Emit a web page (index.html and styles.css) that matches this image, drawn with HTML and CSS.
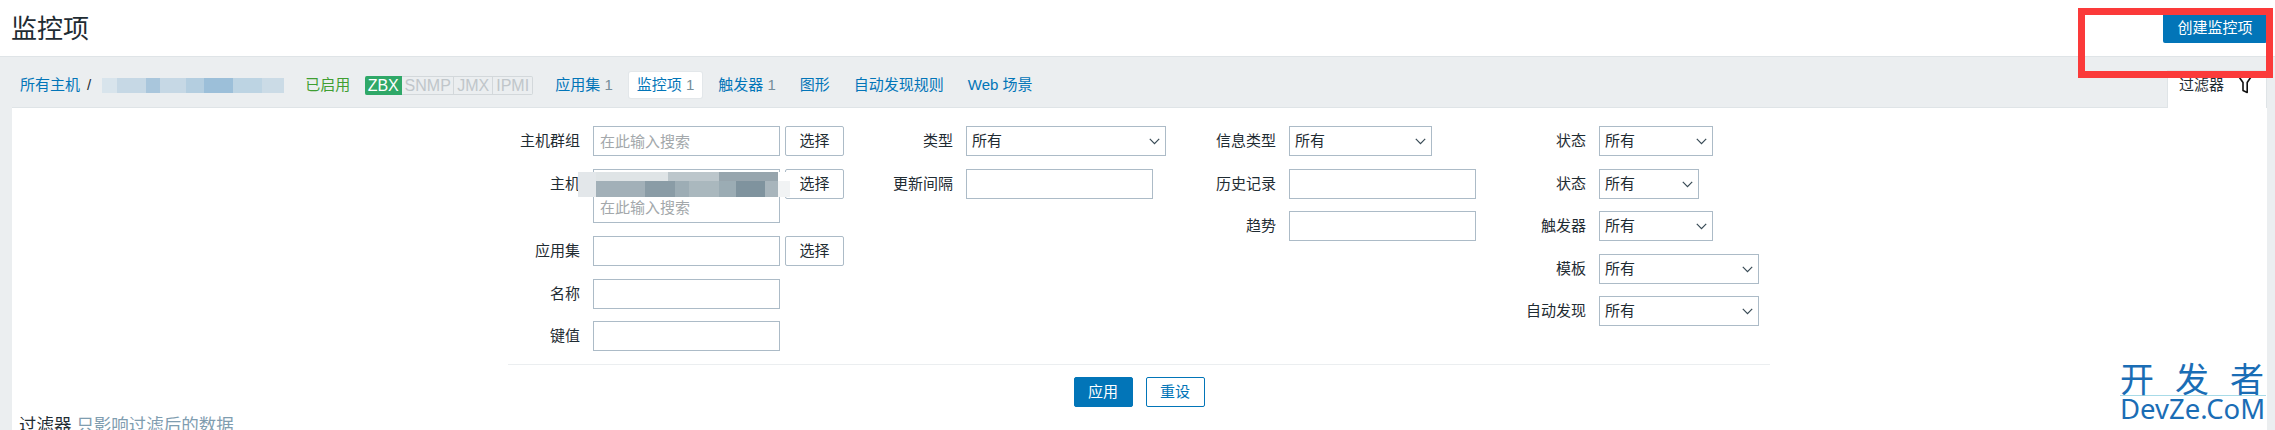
FILE: index.html
```html
<!DOCTYPE html>
<html lang="zh-CN">
<head>
<meta charset="utf-8">
<title>监控项</title>
<link rel="stylesheet" href="styles.css">
</head>
<body>
<header class="page-head">
  <h1 class="page-title">监控项</h1>
  <button class="btn-create">创建监控项</button>
</header>
<nav class="host-nav">
  <a class="crumb">所有主机</a>
  <span class="crumb-sep">/</span>
  <span class="blur-crumb"></span>
  <span class="status-on">已启用</span>
  <span class="badges">
    <span class="badge badge-on">ZBX</span><span class="badge badge-snmp">SNMP</span><span class="badge badge-jmx">JMX</span><span class="badge badge-ipmi">IPMI</span>
  </span>
  <ul class="tabs">
    <li class="tab"><a>应用集</a> <sup class="count">1</sup></li>
    <li class="tab tab-active"><a>监控项</a> <sup class="count">1</sup></li>
    <li class="tab"><a>触发器</a> <sup class="count">1</sup></li>
    <li class="tab"><a>图形</a></li>
    <li class="tab"><a>自动发现规则</a></li>
    <li class="tab"><a>Web 场景</a></li>
  </ul>
  <div class="filter-tab">
    <span>过滤器</span>
    <svg class="filter-icon" width="16" height="20" viewBox="0 0 16 20"><path d="M1 1.5 L15 1.5 L10.2 8.5 L10.2 18.5 L6 16.5 L6 8.5 Z" fill="#fff" stroke="#111" stroke-width="1.6" stroke-linejoin="round"/></svg>
  </div>
</nav>
<main class="panel">
  <form class="filter-form">
    <div class="columns">
      <div class="col col-a">
        <label class="lbl">主机群组</label>
        <div class="ctl"><input class="inp" placeholder="在此输入搜索"><button type="button" class="btn-pick">选择</button></div>
        <label class="lbl">主机</label>
        <div class="ctl ctl-multi">
          <div class="multi">
            <span class="blur-tag"></span>
            <input class="multi-inp" placeholder="在此输入搜索">
          </div>
          <button type="button" class="btn-pick">选择</button>
        </div>
        <label class="lbl">应用集</label>
        <div class="ctl"><input class="inp"><button type="button" class="btn-pick">选择</button></div>
        <label class="lbl">名称</label>
        <div class="ctl"><input class="inp"></div>
        <label class="lbl">键值</label>
        <div class="ctl"><input class="inp"></div>
      </div>
      <div class="col col-b">
        <label class="lbl">类型</label>
        <div class="ctl"><select class="sel sel-200"><option>所有</option></select></div>
        <label class="lbl">更新间隔</label>
        <div class="ctl"><input class="inp"></div>
      </div>
      <div class="col col-c">
        <label class="lbl">信息类型</label>
        <div class="ctl"><select class="sel sel-143"><option>所有</option></select></div>
        <label class="lbl">历史记录</label>
        <div class="ctl"><input class="inp"></div>
        <label class="lbl">趋势</label>
        <div class="ctl"><input class="inp"></div>
      </div>
      <div class="col col-d">
        <label class="lbl">状态</label>
        <div class="ctl"><select class="sel sel-114"><option>所有</option></select></div>
        <label class="lbl">状态</label>
        <div class="ctl"><select class="sel sel-100"><option>所有</option></select></div>
        <label class="lbl">触发器</label>
        <div class="ctl"><select class="sel sel-114"><option>所有</option></select></div>
        <label class="lbl">模板</label>
        <div class="ctl"><select class="sel sel-160"><option>所有</option></select></div>
        <label class="lbl">自动发现</label>
        <div class="ctl"><select class="sel sel-160"><option>所有</option></select></div>
      </div>
    </div>
    <div class="actions">
      <button type="button" class="btn-apply">应用</button>
      <button type="button" class="btn-reset">重设</button>
    </div>
  </form>
  <p class="note"><span class="note-a">过滤器</span> <span class="note-b">只影响过滤后的数据</span></p>
</main>
<div class="red-mark"></div>
<div class="watermark">
  <div class="wm-cn">开发者</div>
  <div class="wm-en">DevZe.CoM</div>
</div>
</body>
</html>
```
FILE: styles.css
```css
* { box-sizing: border-box; }
html, body { margin: 0; height: 430px; overflow: hidden; }
body {
  background: #ebeef0;
  color: #1f2c33;
  font: 15px/20px "Liberation Sans", "Noto Sans CJK SC", sans-serif;
  position: relative;
}
a { color: #0275b8; text-decoration: none; }
button, input, select { font: inherit; margin: 0; }

.page-head {
  height: 57px;
  background: #fff;
  border-bottom: 1px solid #dfe4e7;
  display: flex;
  justify-content: space-between;
  align-items: flex-start;
  padding: 0 8px 0 11px;
}
.page-title { margin: 13px 0 0; font-size: 26px; line-height: 32px; font-weight: 400; }
.btn-create {
  margin-top: 13px;
  width: 104px;
  height: 30px;
  padding: 0;
  border: 0;
  border-radius: 2px;
  background: #0275b8;
  color: #fff;
}

.host-nav {
  height: 50px;
  display: flex;
  align-items: center;
  padding: 6px 8px 0 20px;
}
.crumb-sep { margin: 0 11px 0 7px; }
.blur-crumb {
  width: 182px;
  height: 15px;
  background: linear-gradient(90deg, #d8e4ec 0 8%, #c6d8e5 8% 24%, #a9c6dc 24% 32%, #c6d8e5 32% 46%, #b4cee0 46% 56%, #9cbfd9 56% 72%, #bdd4e3 72% 88%, #cbdbe6 88% 100%);
}
.status-on { margin-left: 21px; color: #3f9e32; }
.badges { display: flex; margin-left: 15px; height: 19px; font-size: 16px; line-height: 17px; }
.badge {
  color: #c0c6ca;
  background: #ebeef0;
  border: 1px solid #d3d8db;
  border-left: 0;
  white-space: nowrap;
  text-align: center;
  overflow: hidden;
}
.badge-snmp { width: 52px; }
.badge-jmx { width: 39px; }
.badge-ipmi { width: 40px; border-radius: 0 2px 2px 0; }
.badge-on { width: 37px; background: #2fa868; border-color: #2fa868; color: #fff; border-radius: 2px 0 0 2px; }
.tabs { list-style: none; display: flex; gap: 8px; margin: 0 0 0 14px; padding: 0; }
.tab { height: 26px; padding: 3px 8px; white-space: nowrap; }
.tab-active { background: #fff; border-radius: 2px; box-shadow: 0 0 0 1px #e3e7ea; }
.count { color: #768d99; font-size: 15px; vertical-align: baseline; line-height: 0; }
.filter-tab {
  margin-left: auto;
  align-self: flex-end;
  width: 100px;
  height: 38px;
  background: #fff;
  border: 1px solid #dfe4e7;
  border-bottom: 0;
  display: flex;
  align-items: flex-start;
  gap: 13px;
  padding: 4px 0 0 11px;
  position: relative;
  top: 1px;
  line-height: 20px;
}
.filter-icon { margin-top: -1px; }

.panel {
  margin: 0 8px 0 12px;
  height: 323px;
  background: #fff;
  border-top: 1px solid #dfe4e7;
  overflow: hidden;
  padding-top: 18px;
}
.filter-form { width: 1262px; margin: 0 0 0 496px; }
.columns { display: flex; align-items: flex-start; height: 238px; }
.col { display: grid; grid-template-columns: 110px max-content; column-gap: 13px; row-gap: 12.5px; align-items: start; }
.col-a { grid-template-columns: 72px max-content; width: 336px; }
.col-b { grid-template-columns: 109px max-content; width: 322px; }
.col-c { width: 310px; }
.lbl { text-align: right; line-height: 29px; white-space: nowrap; }
.ctl { display: flex; align-items: flex-start; gap: 5px; }
.inp, .sel, .multi { height: 30px; border: 1px solid #acbbc7; background-color: #fff; color: #1f2c33; border-radius: 0; outline: 0; }
.inp { width: 187px; padding: 0 6px; }
.inp::placeholder, .multi-inp::placeholder { color: #a3a8ab; opacity: 1; }
.multi { width: 187px; height: 54px; margin-bottom: 1px; padding: 28px 0 0 6px; display: block; position: relative; }
.multi-inp { border: 0; padding: 0; height: 20px; width: 170px; outline: 0; background: transparent; }
.blur-tag {
  position: absolute;
  left: -16px;
  top: 2px;
  width: 212px;
  height: 25px;
  background:
    linear-gradient(90deg, #e3e7ea 0 18px, #a2b0b8 18px 67px, #8a9ca6 67px 97px, #9dadb5 97px 111px, #aab8be 111px 141px, #9bacb4 141px 158px, #7f939e 158px 187px, #a8b5bc 187px 200px, #f1f3f4 200px 212px) 0 9px / 100% 16px no-repeat,
    linear-gradient(90deg, #e3e7ea 0 18px, #dfe4e6 18px 90px, #bcc6cb 90px 141px, #97a5ad 141px 200px, #fff 200px 212px) 0 0 / 100% 9px no-repeat;
}
.btn-pick {
  width: 59px;
  height: 30px;
  padding: 0;
  background: #fff;
  border: 1px solid #acbbc7;
  border-radius: 2px;
  color: #1f2c33;
}
.sel {
  appearance: none;
  padding: 0 20px 0 5px;
  background-image: url("data:image/svg+xml,%3Csvg xmlns='http://www.w3.org/2000/svg' width='11' height='7'%3E%3Cpath d='M.8.8 5.5 5.6 10.2.8' fill='none' stroke='%23384a55' stroke-width='1.2'/%3E%3C/svg%3E");
  background-repeat: no-repeat;
  background-position: right 5px top 11px;
}
.sel-200 { width: 200px; }
.sel-143 { width: 143px; }
.sel-114 { width: 114px; }
.sel-100 { width: 100px; }
.sel-160 { width: 160px; }

.actions {
  padding-top: 12px;
  border-top: 1px solid #ebeef0;
  display: flex;
  justify-content: center;
  gap: 13px;
}
.btn-apply, .btn-reset {
  width: 59px;
  height: 30px;
  padding: 0;
  border: 1px solid #0275b8;
  border-radius: 2px;
}
.btn-apply { background: #0275b8; color: #fff; }
.btn-reset { background: #fff; color: #0275b8; }
.note { margin: 6px 0 0 7px; font-size: 17.5px; line-height: 24px; white-space: nowrap; }
.note-a { color: #1f2c33; }
.note-b { color: #7f9db0; }

.red-mark {
  position: absolute;
  left: 2078px;
  top: 8px;
  width: 195px;
  height: 70px;
  border: 7px solid #fb3a3a;
}
.watermark {
  position: absolute;
  left: 2120px;
  top: 360px;
  width: 146px;
  color: #1a6db5;
  font-family: "Noto Sans", "Noto Sans CJK SC", sans-serif;
}
.wm-cn {
  height: 36px;
  font: 34px/36px "Noto Sans CJK SC", sans-serif;
  letter-spacing: 21px;
  white-space: nowrap;
  border-bottom: 1px solid #a8dbe8;
}
.wm-en { font-size: 27.5px; line-height: 26px; white-space: nowrap; }
```
